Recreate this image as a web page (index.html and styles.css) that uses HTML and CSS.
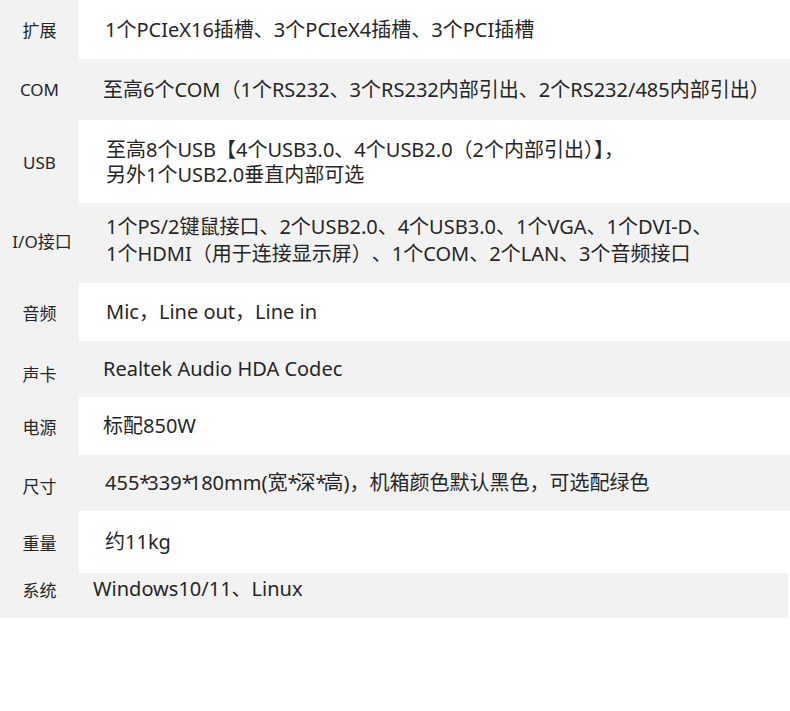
FILE: index.html
```html
<!DOCTYPE html>
<html lang="zh-CN">
<head>
<meta charset="utf-8">
<title>规格参数</title>
<link rel="stylesheet" href="styles.css">
</head>
<body>
<div class="spec">
  <div class="label r1">扩展</div>
  <div class="value white r1 p-106">1个PCIeX16插槽、3个PCIeX4插槽、3个PCI插槽</div>

  <div class="label r2">COM</div>
  <div class="value gray r2 p-104">至高6个COM（1个RS232、3个RS232内部引出、2个RS232/485内部引出）</div>

  <div class="label r3">USB</div>
  <div class="value white r3 p-107 lh-25 trim">至高8个USB【4个USB3.0、4个USB2.0（2个内部引出）】，<br>另外1个USB2.0垂直内部可选</div>

  <div class="label r4">I/O接口</div>
  <div class="value gray r4 p-107 lh-27">1个PS/2键鼠接口、2个USB2.0、4个USB3.0、1个VGA、1个DVI-D、<br>1个HDMI（用于连接显示屏）、1个COM、2个LAN、3个音频接口</div>

  <div class="label r5">音频</div>
  <div class="value white r5 p-108">Mic，Line out，Line in</div>

  <div class="label r6">声卡</div>
  <div class="value gray r6 p-104">Realtek Audio HDA Codec</div>

  <div class="label r7">电源</div>
  <div class="value white r7 p-104">标配850W</div>

  <div class="label r8">尺寸</div>
  <div class="value gray r8 p-106"><span>455<span class="ast">*</span>339<span class="ast">*</span>180mm(宽<span class="ast">*</span>深<span class="ast">*</span>高)，机箱颜色默认黑色，可选配绿色</span></div>

  <div class="label r9">重量</div>
  <div class="value white r9 p-106">约11kg</div>

  <div class="label r10">系统</div>
  <div class="value gray r10 p-94 last">Windows10/11、Linux</div>
</div>
</body>
</html>
```

FILE: styles.css
```css
html, body {
  margin: 0;
  padding: 0;
  background: #ffffff;
}

body {
  width: 790px;
  height: 711px;
  overflow: hidden;
  font-family: "Noto Sans", "Noto Sans CJK SC", sans-serif;
  color: #262626;
}

.spec {
  display: grid;
  grid-template-columns: 79px 1fr;
  grid-template-rows: 59px 61px 83px 80px 58px 56px 58px 56px 62px 45px;
}

.label {
  background: #f2f2f2;
  display: flex;
  align-items: center;
  justify-content: center;
  font-size: 17px;
  color: #262626;
  white-space: nowrap;
  text-spacing-trim: space-all;
}

.value {
  display: flex;
  align-items: center;
  font-size: 20px;
  line-height: 26px;
  white-space: nowrap;
  padding-left: 25px;
  text-spacing-trim: space-all;
}

.value.trim { text-spacing-trim: normal; }

.value > span { display: block; }

.ast { letter-spacing: -3px; }

.value.white { background: #ffffff; }
.value.gray { background: #f2f2f2; }

.p-94 { padding-left: 14px; }
.p-104 { padding-left: 24px; }
.p-106 { padding-left: 26px; }
.p-107 { padding-left: 27px; }
.p-108 { padding-left: 27px; }

.lh-25 { line-height: 25px; }
.lh-27 { line-height: 27px; }

.value.r4 { padding-bottom: 7px; }
.value.r6 { padding-bottom: 1px; }
.value.last { padding-bottom: 13px; margin-right: 2px; }
.label.r10 { padding-bottom: 13px; }
.label.r3 { padding-top: 1px; }
.label.r4 { padding-bottom: 6px; padding-left: 5px; }
.label.r6 { padding-top: 8px; }
.label.r8 { padding-top: 4px; }
```
